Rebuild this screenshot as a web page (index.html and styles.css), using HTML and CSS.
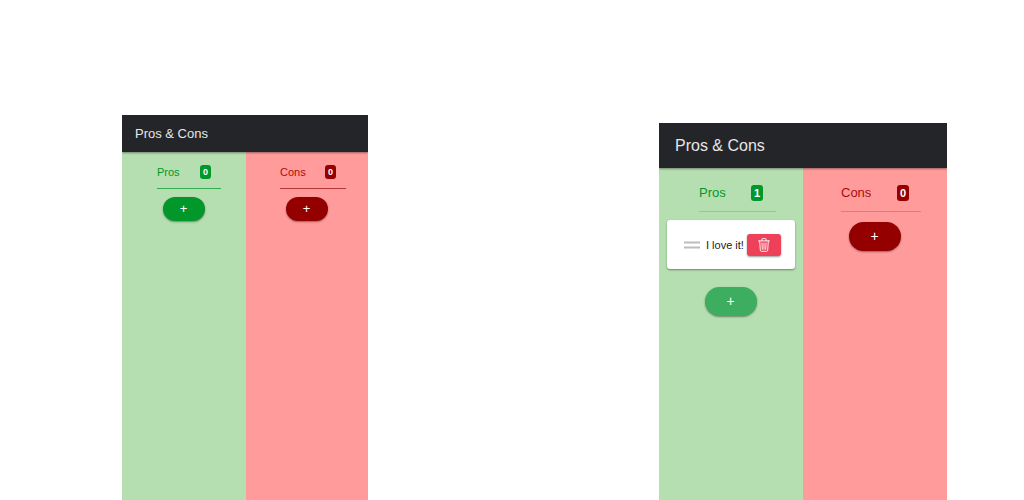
FILE: index.html
```html
<!DOCTYPE html>
<html lang="en">
<head>
<meta charset="utf-8">
<meta name="viewport" content="width=device-width, initial-scale=1">
<title>Pros &amp; Cons</title>
<link rel="stylesheet" href="styles.css">
</head>
<body>
<main class="stage">
  <section class="app app-small">
    <header class="toolbar"><h1 class="title">Pros &amp; Cons</h1></header>
    <div class="columns">
      <div class="column pros">
        <div class="heading"><h2 class="label">Pros</h2><span class="badge">0</span></div>
        <button class="add" type="button" aria-label="Add pro">+</button>
      </div>
      <div class="column cons">
        <div class="heading"><h2 class="label">Cons</h2><span class="badge">0</span></div>
        <button class="add" type="button" aria-label="Add con">+</button>
      </div>
    </div>
  </section>
  <section class="app app-large">
    <header class="toolbar"><h1 class="title">Pros &amp; Cons</h1></header>
    <div class="columns">
      <div class="column pros">
        <div class="heading"><h2 class="label">Pros</h2><span class="badge">1</span></div>
        <div class="card">
          <svg class="handle" viewBox="0 0 16 8" aria-hidden="true"><path d="M0 1.5H16M0 6.5H16"/></svg>
          <span class="card-text">I love it!</span>
          <button class="delete" type="button" aria-label="Delete">
            <svg class="trash" viewBox="0 0 12 14" aria-hidden="true"><path d="M.5 2.9H11.5M3.9 2.7V1.2Q3.9.6 4.5.6H7.5Q8.1.6 8.1 1.2V2.7M1.7 3L2.3 12.2Q2.4 13.3 3.4 13.3H8.6Q9.6 13.3 9.7 12.2L10.3 3M4 5L4.3 11.3M6 5V11.3M8 5L7.7 11.3"/></svg>
          </button>
        </div>
        <button class="add active" type="button" aria-label="Add pro">+</button>
      </div>
      <div class="column cons">
        <div class="heading"><h2 class="label">Cons</h2><span class="badge">0</span></div>
        <button class="add" type="button" aria-label="Add con">+</button>
      </div>
    </div>
  </section>
</main>
</body>
</html>
```

FILE: styles.css
```css
* {
  box-sizing: border-box;
}

body {
  margin: 0;
  background: #fff;
  font-family: "Liberation Sans", Arial, sans-serif;
}

.stage {
  display: grid;
  grid-template-columns: 246fr 288fr;
  column-gap: 291px;
  min-height: 100vh;
  padding: 115px 77px 0 122px;
}

.app {
  display: flex;
  flex-direction: column;
}

.app-large {
  margin-top: 8px;
}

.toolbar {
  position: relative;
  display: flex;
  align-items: center;
  height: 37px;
  padding: 0 13px;
  background: #242529;
  color: #e6e6e7;
  box-shadow: 0 1px 2px rgba(0, 0, 0, 0.4);
  clip-path: inset(0 0 -4px 0);
}

.title {
  margin: 0;
  font-size: 13px;
  font-weight: 400;
}

.columns {
  flex: 1;
  display: grid;
  grid-template-columns: 124fr 122fr;
}

.column {
  display: flex;
  flex-direction: column;
}

.pros {
  --tone: #02972b;
  --line: #35ab50;
  background: #b5dfb0;
}

.cons {
  --tone: #940000;
  --line: #b43438;
  background: #ff9c9b;
}

.heading {
  display: flex;
  align-items: center;
  justify-content: space-between;
  height: 37px;
  margin: 0 25px 8px 35px;
  padding: 4px 10px 0 0;
  border-bottom: 1px solid var(--line);
}

.cons .heading {
  margin-left: 34px;
  margin-right: 22px;
}

.label {
  margin: 0;
  color: var(--tone);
  font-size: 11px;
  font-weight: 400;
}

.cons .label {
  color: #a80c0c;
}

.badge {
  width: 11px;
  border-radius: 3px;
  background: var(--tone);
  color: #fff;
  font-size: 9px;
  font-weight: 700;
  line-height: 14px;
  text-align: center;
}

.add {
  align-self: center;
  width: 42px;
  height: 24px;
  padding: 0 1px 2px 0;
  border: 0;
  border-radius: 15px;
  background: var(--tone);
  color: #fff;
  font: 13px "Liberation Sans", Arial, sans-serif;
  box-shadow: 0 1px 2px rgba(0, 0, 0, 0.4);
}

.app-large .toolbar {
  height: 45px;
  padding: 0 16px;
}

.app-large .title {
  font-size: 16px;
}

.app-large .columns {
  grid-template-columns: 1fr 1fr;
}

.app-large .pros {
  --line: #8ccc92;
}

.app-large .cons {
  --line: #ed7478;
}

.app-large .heading {
  height: 44px;
  margin: 0 27px 8px 40px;
  padding: 7px 13px 0 0;
}

.app-large .cons .heading {
  margin: 0 26px 10px 38px;
  padding-right: 12px;
}

.app-large .label {
  padding-bottom: 1px;
  font-size: 13px;
}

.app-large .badge {
  width: 12px;
  border-radius: 3px;
  font-size: 11px;
  line-height: 16px;
}

.app-large .add {
  width: 52px;
  height: 29px;
  font-size: 14px;
}

.app-large .active {
  background: #3dae5f;
}

.card {
  display: flex;
  align-items: center;
  height: 49px;
  margin: 0 8px 18px;
  padding: 0 14px 0 17px;
  border-radius: 3px;
  background: #fff;
  box-shadow: 0 1px 2px rgba(0, 0, 0, 0.4);
}

.handle {
  flex: none;
  width: 16px;
  height: 8px;
  margin-right: 6px;
  fill: none;
  stroke: #bdbdbd;
  stroke-width: 2;
}

.card-text {
  flex: 1;
  color: #222;
  font-size: 11px;
  white-space: nowrap;
}

.delete {
  display: flex;
  align-items: center;
  justify-content: center;
  width: 34px;
  height: 22px;
  padding: 0;
  border: 0;
  border-radius: 3px;
  background: #ed4159;
  box-shadow: 0 1px 2px rgba(0, 0, 0, 0.4);
}

.trash {
  width: 12px;
  height: 14px;
  fill: none;
  stroke: #fff;
  stroke-width: 0.9;
  stroke-linecap: round;
  stroke-linejoin: round;
}
```
